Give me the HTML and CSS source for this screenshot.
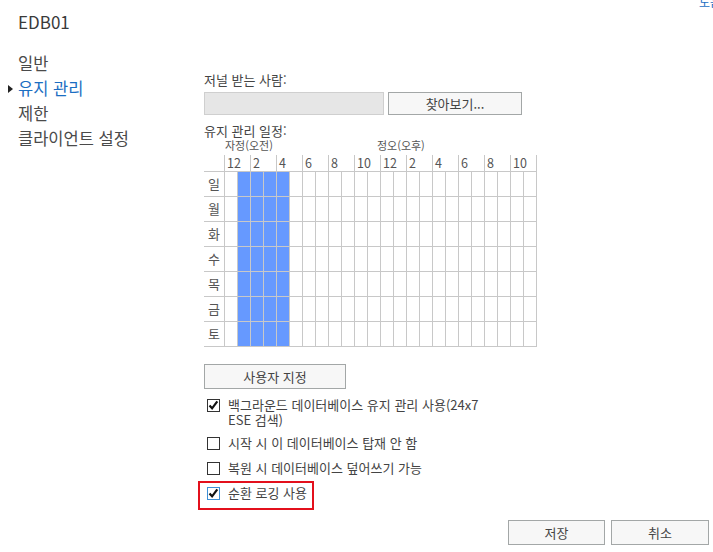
FILE: index.html
```html
<!DOCTYPE html>
<html lang="ko">

<head>
    <meta charset="UTF-8">
    <meta name="viewport" content="width=device-width, initial-scale=1.0">
    <title>EDB01 - 유지 관리</title>
    <link rel="stylesheet" href="styles.css">
</head>

<body>

    <header class="top">
        <h1 class="title">EDB01</h1>
        <a class="help" href="#">도움말</a>
    </header>

    <div class="layout">
        <!-- left menu -->
        <nav class="side">
            <a href="#">일반</a>
            <a href="#" class="active">유지 관리</a>
            <a href="#">제한</a>
            <a href="#">클라이언트 설정</a>
        </nav>

        <main class="content">
            <div class="label">저널 받는 사람:</div>
            <div class="recipient">
                <div class="field"></div>
                <button class="btn browse">찾아보기...</button>
            </div>

            <div class="label sched-label">유지 관리 일정:</div>
            <div class="ampm">
                <span class="am">자정(오전)</span>
                <span class="pm">정오(오후)</span>
            </div>
            <div class="sched" id="sched">
                <div class="hours" id="hours"></div>
            </div>

            <button class="btn custom">사용자 지정</button>

            <div class="checks">
                <label class="check first">
                    <span class="box"><svg viewBox="0 0 11 11"><path d="M1.5 5.5l2.6 2.8 5.2-7" /></svg></span>
                    <span>백그라운드 데이터베이스 유지 관리 사용(24x7<br>ESE 검색)</span>
                </label>
                <label class="check second">
                    <span class="box"></span>
                    <span>시작 시 이 데이터베이스 탑재 안 함</span>
                </label>
                <label class="check third">
                    <span class="box"></span>
                    <span>복원 시 데이터베이스 덮어쓰기 가능</span>
                </label>
                <div class="highlight">
                    <label class="check">
                        <span class="box focus"><svg viewBox="0 0 11 11"><path d="M1.5 5.5l2.6 2.8 5.2-7" /></svg></span>
                        <span>순환 로깅 사용</span>
                    </label>
                </div>
            </div>

            <div class="actions">
                <button class="btn save">저장</button>
                <button class="btn cancel">취소</button>
            </div>
        </main>
    </div>

    <script>
        const days = ["일", "월", "화", "수", "목", "금", "토"];
        const labels = ["12", "2", "4", "6", "8", "10", "12", "2", "4", "6", "8", "10"];
        const sched = document.getElementById("sched");
        const hours = document.getElementById("hours");

        for (let l of labels) {
            const s = document.createElement("span");
            s.innerText = l;
            hours.appendChild(s);
        }

        for (let d of days) {
            const row = document.createElement("div");
            row.className = "day-row";
            const name = document.createElement("span");
            name.className = "day";
            name.innerText = d;
            row.appendChild(name);
            for (let i = 0; i < 24; i++) {
                const c = document.createElement("span");
                c.className = (i >= 1 && i <= 4) ? "cell on" : "cell";
                row.appendChild(c);
            }
            sched.appendChild(row);
        }
    </script>

</body>

</html>
```

FILE: styles.css
```css
body {
    margin: 0;
    padding: 0;
    font-family: "Noto Sans CJK KR", "Noto Sans", sans-serif;
    color: #444;
    background-color: white;
    overflow: hidden;
}

.top {
    display: flex;
    justify-content: space-between;
    align-items: flex-start;
    height: 34px;
}

.title {
    margin: 0;
    padding: 10px 0 0 18px;
    font-size: 17px;
    font-weight: normal;
    line-height: 24px;
    color: #3a3a3a;
}

.help {
    color: #1b6ec2;
    text-decoration: none;
    font-size: 12px;
    line-height: 16px;
    white-space: nowrap;
    margin-top: -6px;
    margin-right: -19px;
}

.layout {
    display: flex;
}

.side {
    width: 204px;
    flex-shrink: 0;
    box-sizing: border-box;
    padding: 17px 0 0 18px;
}

.side a {
    display: block;
    color: #4a4a4a;
    text-decoration: none;
    font-size: 16.5px;
    line-height: 25px;
    position: relative;
}

.side a.active {
    color: #1b6ec2;
}

/* little arrow in front of the selected item */
.side a.active::before {
    content: "";
    position: absolute;
    left: -10px;
    top: 9px;
    border-left: 5px solid #222;
    border-top: 4px solid transparent;
    border-bottom: 4px solid transparent;
}

.content {
    flex: 1;
    padding: 37px 4px 0 0;
    font-size: 13px;
}

.label {
    line-height: 18px;
}

.recipient {
    display: flex;
    gap: 4px;
    margin-top: 3px;
}

.field {
    width: 180px;
    height: 23px;
    box-sizing: border-box;
    background-color: #e6e6e6;
    border: 1px solid #cfcfcf;
}

.btn {
    font-family: inherit;
    font-size: 13px;
    color: #444;
    background-color: #f7f7f7;
    border: 1px solid #a3a7a7;
    border-radius: 0;
    padding: 0;
    box-sizing: border-box;
    height: 25px;
}

.browse {
    width: 134px;
    height: 23px;
}

.sched-label {
    margin-top: 8px;
    line-height: 16px;
}

.ampm {
    display: flex;
    font-size: 11px;
    line-height: 13px;
    color: #555;
}

.ampm .am {
    margin-left: 21px;
}

.ampm .pm {
    margin-left: 104px;
}

.sched {
    margin-top: 3px;
}

.hours {
    display: flex;
    margin-left: 20px;
    height: 16px;
}

.hours span {
    width: 26px;
    box-sizing: border-box;
    border-left: 1px solid #c8c8c8;
    padding-left: 2px;
    line-height: 16px;
    font-size: 12.5px;
    color: #555;
}

.hours span:last-child {
    width: 27px;
    border-right: 1px solid #c8c8c8;
}

.day-row {
    display: flex;
    height: 25px;
}

.day-row:last-child {
    height: 26px;
}

.day-row span {
    box-sizing: border-box;
    border-top: 1px solid #c8c8c8;
}

.day-row:last-child span {
    border-bottom: 1px solid #c8c8c8;
}

.day {
    width: 20px;
    text-align: center;
    font-size: 13px;
    line-height: 24px;
    color: #555;
}

.cell {
    width: 13px;
    border-left: 1px solid #c8c8c8;
}

.cell:last-child {
    width: 14px;
    border-right: 1px solid #c8c8c8;
}

.cell.on {
    background-color: #6699ff;
}

.custom {
    display: block;
    width: 142px;
    margin-top: 17px;
}

.checks {
    margin-top: 8px;
}

.check {
    display: flex;
    align-items: flex-start;
    gap: 8px;
    line-height: 16px;
    color: #444;
}

.check.first {
    line-height: 15px;
}

.check.second {
    margin-top: 8px;
}

.check.third {
    margin-top: 9px;
}

.box {
    width: 13px;
    height: 13px;
    box-sizing: border-box;
    border: 1px solid #333;
    margin: 2px 0 0 3px;
    flex-shrink: 0;
    background-color: white;
}

.check.first .box {
    margin-top: 2px;
}

.box svg {
    display: block;
    width: 11px;
    height: 11px;
    fill: none;
    stroke: #111;
    stroke-width: 2.2;
}

.box.focus {
    border-color: #3c8fd6;
}

.highlight {
    width: 116px;
    box-sizing: border-box;
    border: 2px solid #e3101c;
    margin: 5px 0 0 -6px;
    padding: 2px 0 7px 4px;
}

.actions {
    display: flex;
    justify-content: flex-end;
    gap: 6px;
    margin-top: 10px;
}

.save {
    width: 97px;
}

.cancel {
    width: 98px;
}
```
